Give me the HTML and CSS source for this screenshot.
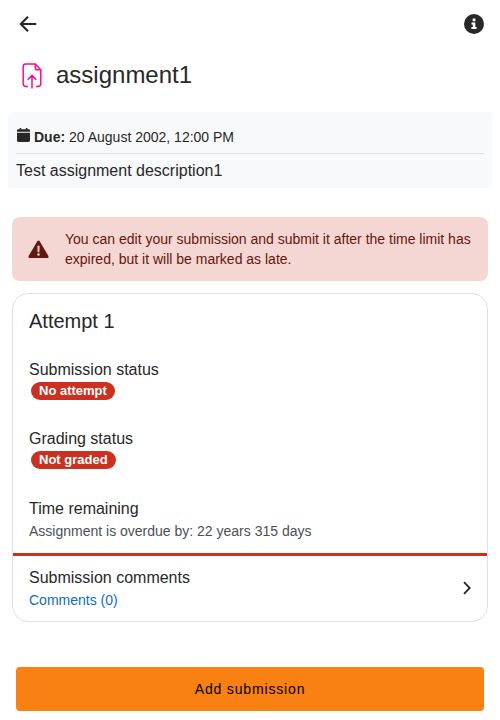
FILE: index.html
```html
<!DOCTYPE html>
<html lang="en">
<head>
<meta charset="utf-8">
<title>assignment1</title>
<link rel="stylesheet" href="styles.css">
</head>
<body>
<header class="toolbar">
  <svg class="back" viewBox="0 0 20 20"><path d="M10 2.8 2.8 10l7.2 7.2M3.2 10h15.1"/></svg>
  <svg class="info" viewBox="0 0 20 20"><circle cx="10" cy="10" r="10"/><path d="M8.7 4.6h2.7v2.6H8.7zM7.5 8.6h3.8v4.3h1.3v2H7.4v-2h1.4v-2.3H7.5z"/></svg>
</header>
<div class="title">
  <svg class="file-icon" viewBox="0 0 20 26"><path d="M6 23.5H4Q1.2 23.5 1.2 20.8V3.5Q1.2 1 3.7 1H13.3L18.8 6.8V20.8Q18.8 23.5 16 23.5H14M13.3 1V4.7Q13.3 6.8 15.3 6.8H18.8M10 25.5V12.6M5.7 16.7 10 12.4l4.3 4.3"/></svg>
  <h1>assignment1</h1>
</div>
<section class="summary">
  <div class="due">
    <svg class="calendar" viewBox="0 0 13 15"><path d="M0 3.7V2.4Q0 1.2 1.2 1.2H2.6V0h1.6v1.2h4.6V0h1.6v1.2h1.4Q13 1.2 13 2.4v1.3zM0 4.8h13v7.8Q13 14 11.6 14H1.4Q0 14 0 12.6z"/></svg>
    <span><b>Due:</b> 20 August 2002, 12:00 PM</span>
  </div>
  <p class="description">Test assignment description1</p>
</section>
<section class="alert">
  <svg class="warning" viewBox="0 0 22 19"><path class="triangle" d="M9.6 1Q11-.9 12.4 1L21.2 16Q22.2 18.5 19.8 18.5H2.2Q-.2 18.5.8 16z"/><path class="mark" d="M11 6.2v5.3"/><circle class="dot" cx="11" cy="14.8" r="1.3"/></svg>
  <p>You can edit your submission and submit it after the time limit has expired, but it will be marked as late.</p>
</section>
<section class="card">
  <h2>Attempt 1</h2>
  <div class="row status"><div class="label">Submission status</div><span class="badge">No attempt</span></div>
  <div class="row status grading"><div class="label">Grading status</div><span class="badge">Not graded</span></div>
  <div class="row overdue"><div class="label">Time remaining</div><div class="detail">Assignment is overdue by: 22 years 315 days</div></div>
  <div class="row comments">
    <div><div class="label">Submission comments</div><div class="detail link">Comments (0)</div></div>
    <svg class="chevron" viewBox="0 0 8 14"><path d="M1 1.2 6.7 7 1 12.8"/></svg>
  </div>
</section>
<button class="submit">Add submission</button>
</body>
</html>
```
FILE: styles.css
```css
* { box-sizing: border-box; }
body {
  margin: 0;
  height: 720px;
  overflow: hidden;
  background: #fff;
  color: #282828;
  font-family: "Liberation Sans", Arial, sans-serif;
  font-size: 16px;
}
svg { display: block; flex: none; }
h1, h2, p { margin: 0; font-weight: 400; }
.toolbar {
  height: 48px;
  padding: 0 16px 0 18px;
  display: flex;
  align-items: center;
  justify-content: space-between;
}
.back { width: 20px; height: 20px; fill: none; stroke: #282828; stroke-width: 2.1; }
.info { width: 20px; height: 20px; fill: #282828; }
.info path { fill: #fff; }
.title { height: 64px; padding: 0 22px 10px; display: flex; align-items: center; gap: 14px; }
.file-icon { width: 20px; height: 26px; margin-top: 1px; fill: none; stroke: #ff0a90; stroke-width: 1.5; }
h1 { font-size: 24px; line-height: 30px; }
.summary { margin: 0 8px; height: 76px; padding: 14px 8px 0; background: #f8f9fa; border-radius: 4px; }
.due { height: 28px; display: flex; gap: 4px; border-bottom: 1px solid #dee2e6; font-size: 14px; line-height: 22px; padding-left: 1px; }
.calendar { width: 13px; height: 15px; fill: #282828; margin-top: 2px; }
.due span { height: 22px; }
.description { line-height: 24px; padding-top: 5px; }
.alert {
  margin: 29px 12px 12px;
  height: 64px;
  padding: 0 16px;
  display: flex;
  align-items: center;
  gap: 16px;
  background: #f4d6d2;
  border-radius: 8px;
  color: #64170f;
  font-size: 14px;
  line-height: 20px;
}
.warning { width: 21px; height: 19px; }
.triangle { fill: #64170f; }
.mark { stroke: #f4d6d2; stroke-width: 2; stroke-linecap: round; }
.dot { fill: #f4d6d2; }
.card { height: 329px; margin: 0 12px; border: 1px solid #dee0e3; border-radius: 16px; overflow: hidden; }
h2 { height: 52px; padding: 15px 16px 0; font-size: 20px; line-height: 24px; }
.row { padding: 12px 16px; }
.status { height: 69px; }
.grading { height: 70px; }
.label { line-height: 24px; }
.badge {
  display: block;
  width: fit-content;
  height: 18px;
  margin-left: 2px;
  padding: 0 8px;
  border-radius: 9px;
  background: #ca3120;
  color: #fff;
  font-size: 13px;
  font-weight: 700;
  line-height: 18px;
}
.detail { font-size: 14px; line-height: 20px; color: #4b5057; }
.overdue { height: 71px; border-bottom: 3px solid #ca3120; }
.comments { height: 64px; padding: 10px 16px; display: flex; justify-content: space-between; align-items: center; }
.link { color: #0f6cbf; }
.chevron { width: 8px; height: 14px; fill: none; stroke: #282828; stroke-width: 1.8; }
.submit {
  display: block;
  width: 468px;
  height: 44px;
  margin: 45px 16px 0;
  padding: 0;
  border: 0;
  border-radius: 4px;
  background: #f98012;
  color: #000;
  font: 14px "Liberation Sans", Arial, sans-serif;
  letter-spacing: .84px;
}
```
